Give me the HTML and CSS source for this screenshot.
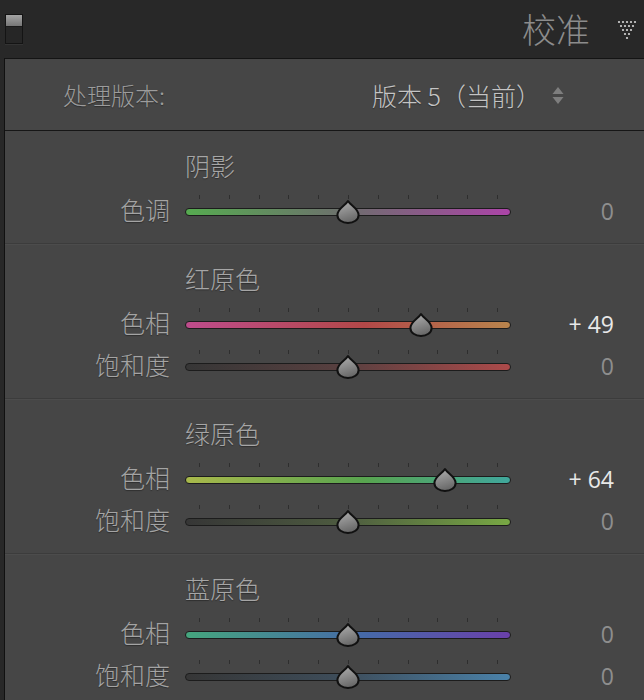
FILE: index.html
```html
<!DOCTYPE html>
<html lang="zh">
<head>
<meta charset="utf-8">
<title>校准</title>
<link rel="stylesheet" href="styles.css">
</head>
<body>
<div class="header">
  <div class="toggle"><span class="toggle-top"></span><span class="toggle-bottom"></span></div>
  <div class="title">校准</div>
  <svg class="menu-icon" width="20" height="20" viewBox="0 0 20 20">
    <g fill="#d4d4d4">
      <circle cx="2" cy="2" r="1.1"/><circle cx="6" cy="2" r="1.1"/><circle cx="10" cy="2" r="1.1"/><circle cx="14" cy="2" r="1.1"/><circle cx="18" cy="2" r="1.1"/>
      <circle cx="4" cy="6" r="1.1"/><circle cx="8" cy="6" r="1.1"/><circle cx="12" cy="6" r="1.1"/><circle cx="16" cy="6" r="1.1"/>
      <circle cx="6" cy="10" r="1.1"/><circle cx="10" cy="10" r="1.1"/><circle cx="14" cy="10" r="1.1"/>
      <circle cx="8" cy="14" r="1.1"/><circle cx="12" cy="14" r="1.1"/>
      <circle cx="10" cy="18" r="1.1"/>
    </g>
  </svg>
</div>

<div class="panel">
  <div class="process-row">
    <span class="process-label">处理版本:</span>
    <span class="process-value">版本 5（当前）</span>
    <svg class="updown" width="12" height="17" viewBox="0 0 12 17">
      <path d="M6 0 L11.5 7 L0.5 7 Z" fill="#7e7e7e"/>
      <path d="M0.5 10 L11.5 10 L6 17 Z" fill="#7e7e7e"/>
    </svg>
  </div>

  <div class="section">
    <div class="section-title">阴影</div>
    <div class="slider-row">
      <span class="label">色调</span>
      <div class="slider">
        <div class="track track-tint"></div>
        <svg class="thumb" style="--pos:0.5" width="26" height="26" viewBox="0 0 26 26"><use href="#drop"/></svg>
      </div>
      <span class="value">0</span>
    </div>
  </div>

  <div class="section">
    <div class="section-title">红原色</div>
    <div class="slider-row">
      <span class="label">色相</span>
      <div class="slider">
        <div class="track track-red-hue"></div>
        <svg class="thumb" style="--pos:0.745" width="26" height="26" viewBox="0 0 26 26"><use href="#drop"/></svg>
      </div>
      <span class="value value-active">+ 49</span>
    </div>
    <div class="slider-row">
      <span class="label">饱和度</span>
      <div class="slider">
        <div class="track track-red-sat"></div>
        <svg class="thumb" style="--pos:0.5" width="26" height="26" viewBox="0 0 26 26"><use href="#drop"/></svg>
      </div>
      <span class="value">0</span>
    </div>
  </div>

  <div class="section">
    <div class="section-title">绿原色</div>
    <div class="slider-row">
      <span class="label">色相</span>
      <div class="slider">
        <div class="track track-green-hue"></div>
        <svg class="thumb" style="--pos:0.825" width="26" height="26" viewBox="0 0 26 26"><use href="#drop"/></svg>
      </div>
      <span class="value value-active">+ 64</span>
    </div>
    <div class="slider-row">
      <span class="label">饱和度</span>
      <div class="slider">
        <div class="track track-green-sat"></div>
        <svg class="thumb" style="--pos:0.5" width="26" height="26" viewBox="0 0 26 26"><use href="#drop"/></svg>
      </div>
      <span class="value">0</span>
    </div>
  </div>

  <div class="section">
    <div class="section-title">蓝原色</div>
    <div class="slider-row">
      <span class="label">色相</span>
      <div class="slider">
        <div class="track track-blue-hue"></div>
        <svg class="thumb" style="--pos:0.5" width="26" height="26" viewBox="0 0 26 26"><use href="#drop"/></svg>
      </div>
      <span class="value">0</span>
    </div>
    <div class="slider-row">
      <span class="label">饱和度</span>
      <div class="slider">
        <div class="track track-blue-sat"></div>
        <svg class="thumb" style="--pos:0.5" width="26" height="26" viewBox="0 0 26 26"><use href="#drop"/></svg>
      </div>
      <span class="value">0</span>
    </div>
  </div>
</div>

<svg class="defs" width="0" height="0">
  <defs>
    <linearGradient id="dropfill" x1="0" y1="0" x2="0.3" y2="1">
      <stop offset="0" stop-color="#b2b2b2"/>
      <stop offset="1" stop-color="#6a6a6a"/>
    </linearGradient>
    <path id="drop" d="M13 2 C15.4 6.2 23.6 9.6 23.6 16 C23.6 20.8 18.8 24 13 24 C7.2 24 2.4 20.8 2.4 16 C2.4 9.6 10.6 6.2 13 2 Z" fill="url(#dropfill)" stroke="#111111" stroke-width="2" stroke-linejoin="round"/>
  </defs>
</svg>
</body>
</html>
```

FILE: styles.css
```css
html, body {
  margin: 0;
  padding: 0;
}

body {
  width: 644px;
  height: 700px;
  overflow: hidden;
  background: #282828;
  font-family: "Noto Sans CJK SC", "Noto Sans", sans-serif;
}

.defs {
  position: absolute;
  width: 0;
  height: 0;
}

/* ---------- header ---------- */
.header {
  height: 58px;
  display: flex;
  align-items: center;
  background: #282828;
}

.toggle {
  margin-left: 5px;
  margin-top: -1px;
  width: 18px;
  height: 30px;
  box-sizing: border-box;
  border: 1px solid #141414;
  display: flex;
  flex-direction: column;
  box-shadow: 0 1px 0 #333;
}

.toggle-top {
  height: 11px;
  background: linear-gradient(#a4a4a4, #767676);
}

.toggle-bottom {
  flex: 1;
  background: #262626;
  border-top: 1px solid #1a1a1a;
}

.title {
  margin-left: auto;
  font-size: 34px;
  font-weight: 300;
  color: #8c8c8c;
  line-height: 40px;
}

.menu-icon {
  margin-left: 27px;
  margin-right: 7px;
  margin-top: 1px;
}

/* ---------- panel ---------- */
.panel {
  margin-left: 4px;
  border-left: 1px solid #111;
  border-top: 1px solid #141414;
  background: #464646;
}

.process-row {
  height: 71px;
  display: flex;
  align-items: center;
  border-bottom: 1px solid #161616;
  padding-left: 58px;
}

.process-label {
  font-size: 24px;
  font-weight: 300;
  color: #9c9c9c;
  text-shadow: 0 1px 1px rgba(0, 0, 0, 0.35);
}

.process-value {
  margin-left: auto;
  font-size: 25px;
  font-weight: 300;
  color: #c4c4c4;
  text-shadow: 0 1px 1px rgba(0, 0, 0, 0.35);
}

.updown {
  margin-left: 11px;
  margin-right: 80px;
  margin-top: 2px;
}

/* ---------- sections ---------- */
.section {
  padding: 18px 0 11px;
  border-bottom: 1px solid #3c3c3c;
  box-shadow: 0 1px 0 #4c4c4c;
}

.section:last-child {
  border-bottom: none;
  box-shadow: none;
}

.section-title {
  height: 36px;
  line-height: 32px;
  margin-bottom: 5px;
  padding-left: 180px;
  font-size: 25px;
  font-weight: 300;
  color: #a6a6a6;
  text-shadow: 0 1px 1px rgba(0, 0, 0, 0.35);
}

.slider-row {
  height: 42px;
  display: grid;
  grid-template-columns: 165px 326px 1fr;
  column-gap: 15px;
  align-items: center;
}

.label {
  text-align: right;
  font-size: 25px;
  font-weight: 300;
  color: #a4a4a4;
  text-shadow: 0 1px 1px rgba(0, 0, 0, 0.35);
  line-height: 36px;
  padding-bottom: 4px;
}

.value {
  text-align: right;
  padding-right: 30px;
  font-family: "Open Sans", "Noto Sans", sans-serif;
  font-size: 23px;
  color: #8e8e8e;
  line-height: 30px;
  padding-bottom: 1px;
}

.value-active {
  color: #e8e8e8;
}

/* ---------- slider ---------- */
.slider {
  position: relative;
  height: 8px;
  margin-top: 1px;
}

.slider::before {
  content: "";
  position: absolute;
  left: 14px;
  top: -13px;
  width: 299px;
  height: 4px;
  background: repeating-linear-gradient(to right, #2e2e2e 0 1px, transparent 1px 29.8px);
}

.track {
  height: 8px;
  box-sizing: border-box;
  border: 1px solid #1c1c1c;
  border-radius: 4px;
}

.track-tint {
  background: linear-gradient(to right, #56ab50, #6e6e6e 50%, #ac44a8);
}

.track-red-hue {
  background: linear-gradient(to right, #be4c8c, #b24848 55%, #b8844c);
}

.track-red-sat {
  background: linear-gradient(to right, #363636, #5a4040 50%, #ad4a4a);
}

.track-green-hue {
  background: linear-gradient(to right, #a9b94b, #58a44f 55%, #40a79c);
}

.track-green-sat {
  background: linear-gradient(to right, #363636, #4e5c40 50%, #78a844);
}

.track-blue-hue {
  background: linear-gradient(to right, #45a67e, #4669a8 55%, #6a40aa);
}

.track-blue-sat {
  background: linear-gradient(to right, #363636, #3e4e5c 50%, #4a82aa);
}

.thumb {
  position: absolute;
  top: -9px;
  left: calc(14px + var(--pos) * 298px - 13px);
}
```
